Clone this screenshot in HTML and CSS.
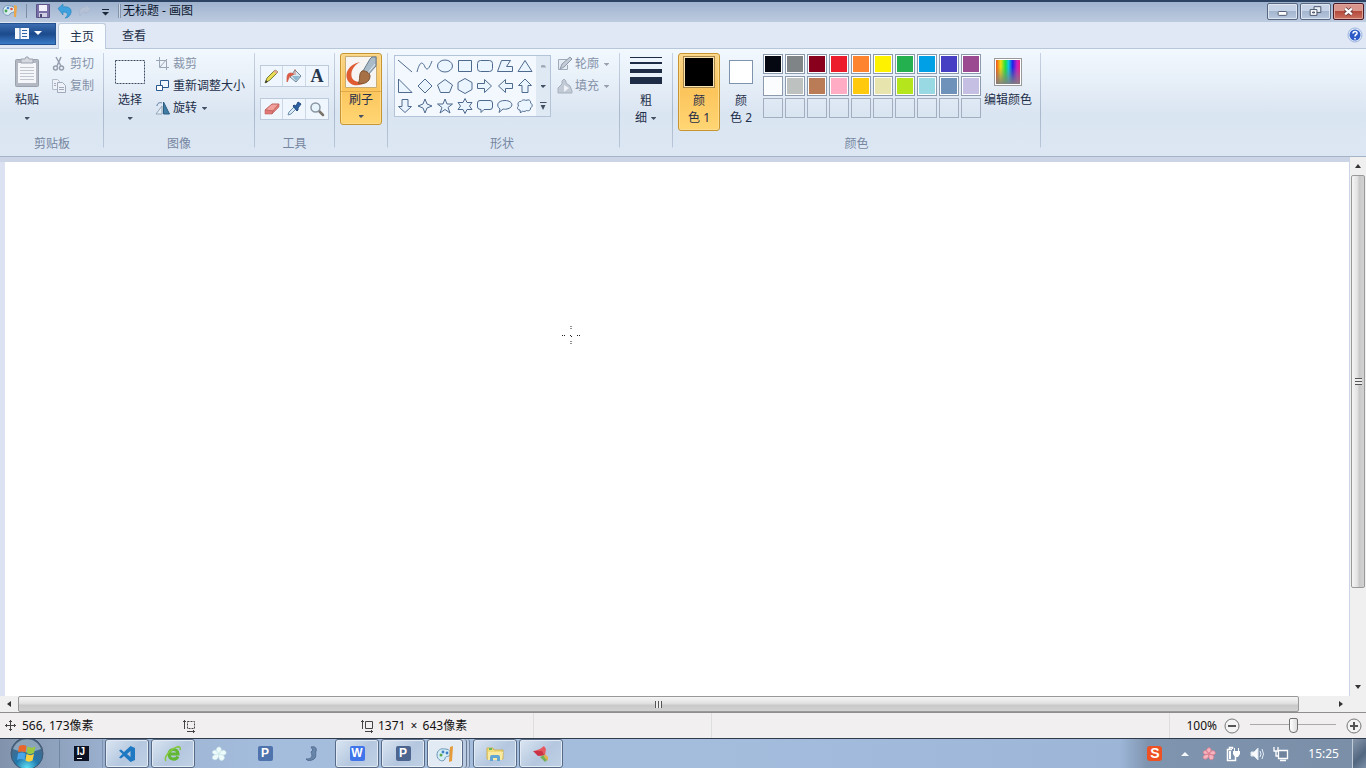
FILE: index.html
```html
<!DOCTYPE html>
<html lang="zh-CN">
<head>
<meta charset="utf-8">
<title>无标题 - 画图</title>
<link rel="stylesheet" href="styles.css">
</head>
<body>
<header class="titlebar">
  <svg class="i16" viewBox="0 0 16 16"><path d="M1 8C1 3 5 2 8 3c5 0 6 4 4 6-2 1-3 0-4 2-1 3-7 1-7-3z" fill="#d9ecf3" stroke="#7896b5"/><circle cx="4" cy="8" r="1.4" fill="#46a54b"/><circle cx="6" cy="5" r="1.3" fill="#4a86d8"/><circle cx="9.500" cy="6" r="1.300" fill="#e0533c"/><path d="M12 2l3 1-1 11h-2z" fill="#e9a64a"/></svg>
  <span class="tb-sep"></span>
  <button class="qat" aria-label="保存"><svg class="i16" viewBox="0 0 16 16"><path d="M1.500 1.500h13v13h-13z" fill="#7a70a8" stroke="#5d5488"/><path d="M4 2h8v6H4z" fill="#f2f2fa"/><path d="M4 10h8v4H4z" fill="#cfcfe4"/><path d="M5 11h2v3H5z" fill="#4c4674"/></svg></button>
  <button class="qat" aria-label="撤消"><svg class="i16" viewBox="0 0 16 16"><path d="M1 5.500L6 1v3c6-1 9 2 8 6-1 3-3 5-6 5 3-2 4-6-2-6v3z" fill="#3ea0dc" stroke="#2a83c0" stroke-width=".6"/></svg></button>
  <button class="qat" aria-label="恢复"><svg class="i16" viewBox="0 0 16 16"><path d="M14 6L9 2v2C4 4 1 7 3 13c1-3 3-4 6-4v2z" fill="#b4c0d4" stroke="#a5b3ca" stroke-width=".5"/></svg></button>
  <button class="qat" aria-label="自定义快速访问工具栏"><svg class="i16" viewBox="0 0 16 16"><path d="M5 6h7v1H5zM5 9h7l-3.500 3.500z" fill="#1c2838"/></svg></button>
  <span class="tb-sep double"></span>
  <h1 class="title">无标题 - 画图</h1>
  <div class="winbtns">
    <button class="wb" aria-label="最小化"><svg viewBox="0 0 30 15"><rect x="10.500" y="7.500" width="9" height="4" rx="1" fill="#fff" stroke="#4e5b70"/></svg></button>
    <button class="wb" aria-label="还原"><svg viewBox="0 0 30 15"><path d="M13.500 2.500h7v6h-7z" fill="#e8eef6" stroke="#47546a"/><path d="M9.500 5.500h7v6h-7z" fill="#fff" stroke="#47546a"/><path d="M12 8h2v1h-2z" fill="#9ab" stroke="#47546a"/></svg></button>
    <button class="wb close" aria-label="关闭"><svg viewBox="0 0 30 15"><path d="M11.500 4.500l7 6M18.500 4.500l-7 6" stroke="#573037" stroke-width="4"/><path d="M11.500 4.500l7 6M18.500 4.500l-7 6" stroke="#fff" stroke-width="2.400"/></svg></button>
  </div>
</header>
<nav class="tabs">
  <button class="filebtn" aria-label="画图菜单"><svg viewBox="0 0 32 14"><path d="M3 1h14v11H3z" fill="#f4f8fc"/><path d="M8 1v11M10 3.500h5M10 6.500h5M10 9.500h5" stroke="#2d64a8" fill="none"/><path d="M22 4h8l-4 4z" fill="#fff"/></svg></button>
  <button class="tab active">主页</button>
  <button class="tab">查看</button>
  <button class="help" aria-label="帮助"><svg class="i16" viewBox="0 0 16 16"><circle cx="8" cy="8" r="7" fill="#e6eefb" stroke="#9db4de"/><circle cx="8" cy="8" r="5.500" fill="#2c5bc8"/><path d="M6 6.500C6 3.500 10.500 4 10 6.500 9.700 7.700 8 7.500 8 9.500M8 11v1.500" stroke="#fff" stroke-width="1.600" fill="none"/></svg></button>
</nav>
<div class="ribbon">
  <section class="group first">
    <div class="content">
      <button class="big"><svg class="i32" viewBox="0 0 32 32"><rect x="4.500" y="3.500" width="23" height="27" rx="1" fill="#b3b8c2" stroke="#9ba1ad"/><path d="M7 7h18v20H7z" fill="#f4f6fa"/><path d="M9 11.500h14M9 14.500h14M9 17.500h14M9 20.500h14M9 23.500h14" stroke="#c0c5ce"/><path d="M10 3h4l1-2h2l1 2h4v4H10z" fill="#d5d8df" stroke="#9ba1ad"/></svg><span>粘贴</span><i class="arrow"></i></button>
      <div class="smalls">
        <button class="small off"><svg class="i16" viewBox="0 0 16 16"><path d="M4 1l5 9M9 1L5 10" stroke="#959fae" stroke-width="1.500"/><circle cx="3.500" cy="12" r="2" fill="none" stroke="#959fae" stroke-width="1.500"/><circle cx="9.500" cy="12" r="2" fill="none" stroke="#959fae" stroke-width="1.500"/></svg><span>剪切</span></button>
        <button class="small off"><svg class="i16" viewBox="0 0 16 16"><path d="M.5 1.500h5l2 2v8h-7z" fill="#eef2f8" stroke="#b3bcca"/><path d="M5.500 4.500h5l3 3v7h-8z" fill="#eef2f8" stroke="#a0aaba"/><path d="M7 9.500h5M7 11.500h5M2 5.500h2M2 7.500h2" stroke="#a0aaba"/></svg><span>复制</span></button>
      </div>
    </div>
    <h2 class="label">剪贴板</h2>
  </section>
  <section class="group">
    <div class="content">
      <button class="big"><svg class="i32" viewBox="0 0 32 32"><rect x="1.500" y="4.500" width="29" height="23" fill="#f0f7fe" stroke="#3b4a60" stroke-dasharray="2 1"/></svg><span>选择</span><i class="arrow"></i></button>
      <div class="smalls">
        <button class="small off"><svg class="i16" viewBox="0 0 16 16"><path d="M4.500 1v10.500H14M1 4.500h10.500V14M5 11l7-8" fill="none" stroke="#9aa5b5"/></svg><span>裁剪</span></button>
        <button class="small"><svg class="i16" viewBox="0 0 16 16"><path d="M5.500 2.500h8v7h-8z" fill="#eef6ff" stroke="#27598f"/><path d="M1.500 7.500h6v5h-6z" fill="#fff" stroke="#27598f"/></svg><span>重新调整大小</span></button>
        <button class="small"><svg class="i16" viewBox="0 0 16 16"><path d="M8.500 2v12h6z" fill="#3f7da5" stroke="#2c5e82"/><path d="M7 6v8H1z" fill="#e6eef5" stroke="#93a5b8"/><path d="M2 6c0-3 3-4 5-3" fill="none" stroke="#56799b"/></svg><span>旋转</span><i class="arrow"></i></button>
      </div>
    </div>
    <h2 class="label">图像</h2>
  </section>
  <section class="group">
    <div class="content toolset">
      <div class="toolrow">
        <button aria-label="铅笔"><svg class="i16" viewBox="0 0 16 16"><path d="M1 15l2-5 8-8 3 2-8 8z" fill="#e9dc52" stroke="#77803a"/><path d="M11 2l3 2-1.500 1.500-3-2z" fill="#e8a4a0"/><path d="M1 15l1-3 2 2z" fill="#333"/></svg></button>
        <button aria-label="用颜色填充"><svg class="i16" viewBox="0 0 16 16"><path d="M9 2l6 6-5 6-6-5z" fill="#d8e8f0" stroke="#6e8698"/><path d="M6 8l8 0-4 5z" fill="#8cb8d0"/><path d="M9 7V1M1 10c0-5 3-6 7-4L5 8c-2 0-2 3-4 6z" fill="#e05b43" stroke="#c85743" stroke-width=".7"/></svg></button>
        <button aria-label="文本" class="texttool">A</button>
      </div>
      <div class="toolrow">
        <button aria-label="橡皮擦"><svg class="i16" viewBox="0 0 16 16"><path d="M1 9l7-6h7l-6 7z" fill="#f2a09c" stroke="#bf6360"/><path d="M1 9v4h7l1-3zM9 10l6-7v3l-7 7z" fill="#e07875" stroke="#bf6360" stroke-width=".6"/></svg></button>
        <button aria-label="颜色选取器"><svg class="i16" viewBox="0 0 16 16"><path d="M2 14l1-3 5-5 2 2-5 5z" fill="#d9ecf8" stroke="#7290ac"/><path d="M7 5l1-1 2 1 2-4 3 2-3 4 0 2-1 1z" fill="#2c62a4" stroke="#214b80"/></svg></button>
        <button aria-label="放大镜"><svg class="i16" viewBox="0 0 16 16"><path d="M9.500 9.500L14 14" stroke="#7a7468" stroke-width="2.500" stroke-linecap="round"/><circle cx="6.500" cy="6.500" r="4.500" fill="#e8f4fc" stroke="#8b96a4" stroke-width="1.500"/></svg></button>
      </div>
    </div>
    <h2 class="label">工具</h2>
  </section>
  <section class="group">
    <div class="content">
      <button class="big hot"><svg class="i32" viewBox="0 0 32 32"><path d="M.5.5h31v31H.5z" fill="#f6f5f3" stroke="#c9ac72"/><path d="M15 6C3 9 0 17 2 23c3 8 14 8 20 2-7 2-13 1-15-3C5 16 8 10 15 6z" fill="#df5b32"/><path d="M18 15l7-12 2-2h4v9l-9 10z" fill="#a9bbc9" stroke="#687d90"/><path d="M20 16l5 5-2-4 7-9" fill="none" stroke="#dde6ec"/><path d="M17 15c3-1 8 2 8 5 0 6-6 9-12 7 3-3 0-9 4-12z" fill="#a87045" stroke="#7f5433"/></svg><span class="split">刷子</span><i class="arrow"></i></button>
    </div>
  </section>
  <section class="group shapes-group">
    <div class="content">
      <div class="gallery">
        <div class="shapes">
          <button aria-label="直线"><svg viewBox="0 0 20 20"><path d="M3 4l14 12"/></svg></button>
          <button aria-label="曲线"><svg viewBox="0 0 20 20"><path d="M2 16C5 4 8 6 10 11c2 4 4 2 7-6"/></svg></button>
          <button aria-label="椭圆形"><svg viewBox="0 0 20 20"><ellipse cx="10" cy="10" rx="7.500" ry="6"/></svg></button>
          <button aria-label="矩形"><svg viewBox="0 0 20 20"><path d="M3.500 4.500h13v11h-13z"/></svg></button>
          <button aria-label="圆角矩形"><svg viewBox="0 0 20 20"><rect x="2.500" y="4.500" width="15" height="11" rx="3"/></svg></button>
          <button aria-label="多边形"><svg viewBox="0 0 20 20"><path d="M2.500 15.500l4-11h9l-4 6h6v5z"/></svg></button>
          <button aria-label="三角形"><svg viewBox="0 0 20 20"><path d="M10 4.500l7 11H3z"/></svg></button>
          <button aria-label="直角三角形"><svg viewBox="0 0 20 20"><path d="M3.500 3v13.500H17z"/></svg></button>
          <button aria-label="菱形"><svg viewBox="0 0 20 20"><path d="M10 3l7 7-7 7-7-7z"/></svg></button>
          <button aria-label="五边形"><svg viewBox="0 0 20 20"><path d="M10 3.500l7.500 5.500-3 7.500h-9L2.500 9z"/></svg></button>
          <button aria-label="六边形"><svg viewBox="0 0 20 20"><path d="M10 2.500l7 4v7l-7 4-7-4v-7z"/></svg></button>
          <button aria-label="右箭头"><svg viewBox="0 0 20 20"><path d="M2.500 7.500h7v-4l7 6.500-7 6.500v-4h-7z"/></svg></button>
          <button aria-label="左箭头"><svg viewBox="0 0 20 20"><path d="M17.500 7.500h-7v-4L3.500 10l7 6.500v-4h7z"/></svg></button>
          <button aria-label="上箭头"><svg viewBox="0 0 20 20"><path d="M7 16.500v-7H3.500L10 3l6.500 6.500H13v7z"/></svg></button>
          <button aria-label="下箭头"><svg viewBox="0 0 20 20"><path d="M7 3.500v7H3.500l6.500 6 6.500-6H13v-7z"/></svg></button>
          <button aria-label="四角星"><svg viewBox="0 0 20 20"><path d="M10 3l2 5 5 2-5 2-2 5-2-5-5-2 5-2z"/></svg></button>
          <button aria-label="五角星"><svg viewBox="0 0 20 20"><path d="M10 3l2 5h5.500l-4.500 3.500 2 5.500-5-3.500L5 17l2-5.500L2.500 8H8z"/></svg></button>
          <button aria-label="六角星"><svg viewBox="0 0 20 20"><path d="M10 2.500l2 4h5l-2.500 3.500L17 13.500h-5l-2 4-2-4H3L5.500 10 3 6.500h5z"/></svg></button>
          <button aria-label="圆角矩形标注"><svg viewBox="0 0 20 20"><path d="M5 4.500h10q2.500 0 2.500 2.500v4q0 2.500-2.500 2.500H9l-3 3v-3q-3.500 0-3.500-2.500V7Q2.500 4.500 5 4.500z"/></svg></button>
          <button aria-label="椭圆形标注"><svg viewBox="0 0 20 20"><path d="M5 13C1 10 2 4.500 10 4.500s9.500 7 2 8.500c-2 .4-3 .2-4 0l-4 3.500z"/></svg></button>
          <button aria-label="云形标注"><svg viewBox="0 0 20 20"><path d="M5 14c-3 0-3-3-1.500-4C2 7 4 5 6 5.500 8 3 10 4 11 4.500c3-1.500 5 0 4.500 2.500 2.500 1 2 4 0 5 0 3-2 3-4 2.500-2 1.500-3 1-4 .5l-2 2z"/></svg></button>
        </div>
        <div class="gscroll">
          <button aria-label="上一行" class="dim"><i class="arrow up"></i></button>
          <button aria-label="下一行"><i class="arrow"></i></button>
          <button aria-label="更多形状"><i class="arrow bar"></i></button>
        </div>
      </div>
      <div class="smalls">
        <button class="small off"><svg class="i16" viewBox="0 0 16 16"><path d="M11 3.500H1.500v10h9V9" fill="#e5ebf3" stroke="#9fabba"/><path d="M3 13l2-5 8-7 2 2-8 8z" fill="#c3cbd6" stroke="#8f9bac"/></svg><span>轮廓</span><i class="arrow"></i></button>
        <button class="small off"><svg class="i16" viewBox="0 0 16 16"><path d="M1 15v-5l4-4V3l2-2 2 2v2l4 3 2 5v2z" fill="#c2cad5" stroke="#a6b0be"/><path d="M7 7l5 3-5 4z" fill="#eff3f8"/></svg><span>填充</span><i class="arrow"></i></button>
      </div>
    </div>
    <h2 class="label">形状</h2>
  </section>
  <section class="group">
    <div class="content">
      <button class="big two"><svg class="i32" viewBox="0 0 32 32"><path d="M0 1h32v1H0zM0 6h32v2H0zM0 13h32v4H0zM0 21h32v7H0z" fill="#1e2d45"/></svg><span>粗<br>细 <i class="arrow"></i></span></button>
    </div>
  </section>
  <section class="group">
    <div class="content">
      <button class="big two hot"><b class="current black"></b><span>颜<br>色 1</span></button>
      <button class="big two"><b class="current white"></b><span>颜<br>色 2</span></button>
      <div class="palette">
        <button class="c01" aria-label="黑色"></button><button class="c02" aria-label="灰色-50%"></button><button class="c03" aria-label="深红色"></button><button class="c04" aria-label="红色"></button><button class="c05" aria-label="橙色"></button><button class="c06" aria-label="黄色"></button><button class="c07" aria-label="绿色"></button><button class="c08" aria-label="青绿色"></button><button class="c09" aria-label="靛青色"></button><button class="c10" aria-label="紫色"></button>
        <button class="c11" aria-label="白色"></button><button class="c12" aria-label="灰色-25%"></button><button class="c13" aria-label="褐色"></button><button class="c14" aria-label="玫瑰色"></button><button class="c15" aria-label="金色"></button><button class="c16" aria-label="浅黄色"></button><button class="c17" aria-label="酸橙色"></button><button class="c18" aria-label="淡青绿色"></button><button class="c19" aria-label="蓝灰色"></button><button class="c20" aria-label="淡紫色"></button>
        <button class="none" aria-label="自定义 1"></button><button class="none" aria-label="自定义 2"></button><button class="none" aria-label="自定义 3"></button><button class="none" aria-label="自定义 4"></button><button class="none" aria-label="自定义 5"></button><button class="none" aria-label="自定义 6"></button><button class="none" aria-label="自定义 7"></button><button class="none" aria-label="自定义 8"></button><button class="none" aria-label="自定义 9"></button><button class="none" aria-label="自定义 10"></button>
      </div>
      <button class="big edit"><b class="spectrum"></b><span>编辑颜色</span></button>
    </div>
    <h2 class="label">颜色</h2>
  </section>
</div>
<main class="work">
  <div class="canvas">
    <svg class="cursor" viewBox="0 0 20 20"><path d="M10 1v1M10 3v1M10 16v1M10 18v1M1 10.500h1M3 10.500h1M16 10.500h1M18 10.500h1M9 10.500h1M10 11.500h1" stroke="#222" fill="none" stroke-width="1"/></svg>
  </div>
  <div class="vscroll">
    <button aria-label="向上滚动"><i class="tri up"></i></button>
    <div class="vtrack"><div class="vthumb"><i class="grip"></i></div><div class="vrest"></div></div>
    <button aria-label="向下滚动"><i class="tri down"></i></button>
  </div>
  <div class="hscroll">
    <button aria-label="向左滚动"><i class="tri left"></i></button>
    <div class="htrack"><div class="hthumb"><i class="grip"></i></div><div class="hrest"></div></div>
    <button aria-label="向右滚动"><i class="tri right"></i></button>
  </div>
  <div class="corner"></div>
</main>
<footer class="status">
  <div class="cell"><svg class="i14" viewBox="0 0 14 14"><path d="M6.500 1v11M1 6.500h11M5 2.500h3M5 10.500h3M2.500 5v3M10.500 5v3" stroke="#444" fill="none"/></svg><span>566, 173像素</span></div>
  <div class="cell"><svg class="i14" viewBox="0 0 14 14"><path d="M2.500 1v9M1 2.500h3M5 12.500h8M11.500 11v3" stroke="#444" fill="none"/><path d="M5.500 2.500h7v7h-7z" fill="none" stroke="#444" stroke-dasharray="2 1"/></svg></div>
  <div class="cell line"><svg class="i14" viewBox="0 0 14 14"><path d="M2.500 1v9M1 2.500h3M5 12.500h8M11.500 11v3M5.500 2.500h7v7h-7z" fill="none" stroke="#444"/></svg><span>1371 <span class="times">×</span> 643像素</span></div>
  <div class="cell line"></div>
  <div class="cell line"></div>
  <div class="zoom">
    <label for="zoom">100%</label>
    <button aria-label="缩小"><svg class="i16" viewBox="0 0 16 16"><circle cx="8" cy="8" r="7" fill="#f4f4f4" stroke="#777"/><path d="M4 8h8" stroke="#555" stroke-width="2"/></svg></button>
    <input id="zoom" type="range" min="0" max="100" value="50">
    <button aria-label="放大"><svg class="i16" viewBox="0 0 16 16"><circle cx="8" cy="8" r="7" fill="#f4f4f4" stroke="#777"/><path d="M4 8h8M8 4v8" stroke="#555" stroke-width="2"/></svg></button>
  </div>
</footer>
<div class="taskbar">
  <button class="start" aria-label="开始"><svg viewBox="0 0 36 29"><defs><radialGradient id="orb" cx=".5" cy=".95" r=".8"><stop offset="0" stop-color="#5ee0f5"/><stop offset=".45" stop-color="#2278ac"/><stop offset="1" stop-color="#4a6684"/></radialGradient></defs><circle cx="18" cy="14.500" r="16" fill="url(#orb)" stroke="#40566f"/><path d="M4 10C9-3 27-3 32 10c-9 4-19 4-28 0z" fill="#c5d5e3" opacity=".55"/><path d="M10 7c3-1.500 5-1.500 7.500 0l-1 6.500c-3-1.500-5-1.500-7.500 0z" fill="#e8662b"/><path d="M18.500 7.500c3 1.500 5 1.500 8 0l-1.500 6.500c-3 1.500-5 1.500-7.500 0z" fill="#9bc843"/><path d="M9 14.500c3-1.500 5-1.500 7.500 0l-1 6.500c-3-1.500-5-1.500-7.500 0z" fill="#4aa5e8"/><path d="M17.500 15c3 1.500 5 1.500 7.500 0l-1.500 6.500c-3 1.500-4.500 1.500-7 0z" fill="#fbd03c"/></svg></button>
  <div class="apps">
    <button class="app plain" aria-label="IntelliJ IDEA"><span class="logo ij">IJ</span></button>
    <button class="app" aria-label="VS Code"><svg class="i18" viewBox="0 0 18 18"><path d="M12.500 1L17 3v12l-4.500 2L6 11l-3 2.500L1 12.500 4.500 9 1 5.500l2-1L6 7zM12.500 6L9 9l3.500 3z" fill="#1e78c2" fill-rule="evenodd"/></svg></button>
    <button class="app" aria-label="浏览器"><svg class="i18" viewBox="0 0 18 18"><path d="M14 11.500c-2 4-9 3.500-9-2.500 0-6 9-6 9 0H5" fill="none" stroke="#62b832" stroke-width="3"/><path d="M2 16C-1 12 9 1 16 2M13 2c2-1 4 0 3 3" fill="none" stroke="#86c940" stroke-width="1.500"/></svg></button>
    <button class="app plain" aria-label="风车"><svg class="i18" viewBox="0 0 18 18"><path d="M9 9C5 7 6 2 9 2s3 4 0 7c1-4 6-5 7-2s-3 4-7 2c5 0 7 4 4 6s-5-2-4-6c0 5-4 7-6 5s1-5 6-5C5 11 1 8 3 6s5 0 6 3z" fill="#eefbfb" stroke="#cce7ea" stroke-width=".6"/></svg></button>
    <button class="app plain" aria-label="P"><span class="logo pblue">P</span></button>
    <button class="app plain" aria-label="钩子"><svg class="i18" viewBox="0 0 18 18"><path d="M9 2c4-1 6 1 5 4-1 3 1 5-2 8-3 2-7 2-8 0 4 0 6-1 6-4 0-1-1-2-1-3l2-2z" fill="#6886a9" stroke="#536f93"/></svg></button>
    <button class="app" aria-label="WPS"><span class="logo wps">W</span></button>
    <button class="app" aria-label="P 2"><span class="logo pdark">P</span></button>
    <button class="app stack current-app" aria-label="画图"><svg class="i18" viewBox="0 0 18 18"><path d="M1 10c0-5 4-7 8-6 6 0 6 5 4 7-2 1-4 0-4 3-2 4-8 1-8-4z" fill="#d4edf6" stroke="#6c99b5"/><circle cx="5" cy="10" r="1.500" fill="#5aa64c"/><circle cx="7" cy="7" r="1.400" fill="#3f7fc8"/><circle cx="11" cy="8" r="1.400" fill="#3f7fc8"/><path d="M14 2l3-1-1 15-3 1z" fill="#e59b3c"/></svg></button>
    <button class="app" aria-label="资源管理器"><svg class="i18" viewBox="0 0 18 18"><path d="M1 3h6l1 2h9v9H1z" fill="#f1dc7c" stroke="#cfb052"/><path d="M2 7h15l-1 8H2z" fill="#f8eaa0"/><path d="M4 16v-4q0-2 2-2h6q2 0 2 2v4h-3v-3H7v3z" fill="#5fa6d5"/><path d="M3 3h3v2H3z" fill="#68b85e"/></svg></button>
    <button class="app" aria-label="录屏"><svg class="i18" viewBox="0 0 18 18"><path d="M2 6l6-2 4-3 2 3-1 6-5 1z" fill="#e65860"/><path d="M1 6h9l2 4-6 1z" fill="#c93346"/><path d="M8 12l4-2 4 4-3 3z" fill="#72b35a"/><path d="M13 9l3 3v4l-4-4z" fill="#e4b34e"/></svg></button>
  </div>
  <div class="tray">
    <button aria-label="搜狗输入法"><span class="sogou">S</span></button>
    <button aria-label="显示隐藏的图标"><svg class="i16" viewBox="0 0 16 16"><path d="M4 10h8L8 6z" fill="#f4f8fc"/></svg></button>
    <button aria-label="风车托盘"><svg class="i16" viewBox="0 0 18 18"><path d="M9 9C5 7 6 2 9 2s3 4 0 7c1-4 6-5 7-2s-3 4-7 2c5 0 7 4 4 6s-5-2-4-6c0 5-4 7-6 5s1-5 6-5C5 11 1 8 3 6s5 0 6 3z" fill="#f5b4be" stroke="#dc7e90"/></svg></button>
    <button aria-label="电源"><svg class="i16" viewBox="0 0 16 16"><path d="M7 3.500H2.500v11h8V11M4.500 3V1.500h3V3" fill="none" stroke="#fff" stroke-width="1.500"/><path d="M4 5h2v8H4zM8 5h7v3l-2 3h-3L8 8zM9 2h1v3H9zM13 2h1v3h-1z" fill="#fff"/></svg></button>
    <button aria-label="音量"><svg class="i16" viewBox="0 0 16 16"><path d="M2 6h3l4-4v12l-4-4H2z" fill="#f8fafc" stroke="#dce4ee"/><path d="M11 5q2 3 0 6M13 3q3 5 0 10" fill="none" stroke="#e5edf6"/></svg></button>
    <button aria-label="网络"><svg class="i16" viewBox="0 0 16 16"><path d="M5.500 4.500h9v8h-9zM7 14.500h6" fill="#6f839c" stroke="#fff" stroke-width="1.300"/><path d="M1 1v4h4V1M3 5v5h2" fill="none" stroke="#fff" stroke-width="1.300"/></svg></button>
    <time class="clock">15:25</time>
    <button class="desktop" aria-label="显示桌面"></button>
  </div>
</div>
</body>
</html>
```

FILE: styles.css
```css
* { box-sizing: border-box; }

body {
  margin: 0;
  min-height: 100vh;
  display: flex;
  flex-direction: column;
  overflow: hidden;
  font: 12px/16px "Noto Sans", "Noto Sans CJK SC", sans-serif;
  color: #1e2f4a;
}

button {
  margin: 0;
  padding: 0;
  border: 0;
  background: none;
  font: inherit;
  color: inherit;
}

svg { display: block; flex: none; }
h1, h2 { margin: 0; font: inherit; }
.i14 { width: 14px; height: 14px; }
.i16 { width: 16px; height: 16px; }
.i18 { width: 18px; height: 18px; }
.i32 { width: 32px; height: 32px; }

.arrow {
  flex: none;
  display: inline-block;
  width: 7px;
  height: 8px;
  background: linear-gradient(#445064, #445064) center / 5px 3px no-repeat;
  clip-path: polygon(0 30%, 100% 30%, 50% 75%);
}
.arrow.up { clip-path: polygon(0 70%, 100% 70%, 50% 20%); }
.arrow.bar {
  clip-path: polygon(0 0, 100% 0, 100% 15%, 85% 38%, 50% 100%, 15% 38%, 0 15%);
  background: linear-gradient(#445064 1px, transparent 1px, transparent 3px, #445064 3px);
}

/* Title bar */
.titlebar {
  display: flex;
  align-items: center;
  height: 22px;
  padding: 0 2px 2px;
  border-top: 2px solid #2c4364;
  background: linear-gradient(#9fb3cf, #bdcbdf);
}
.tb-sep { width: 1px; height: 14px; margin: 0 8px; background: #7d8ca5; }
.tb-sep.double { width: 3px; margin: 0 2px 0 1px; border: solid #8493ac; border-width: 0 1px; background: #ccd7e6; }
.qat { padding: 0 4px 0 0; }
.tb-sep + .qat { padding-left: 7px; margin-left: -7px; }
.tb-sep + .qat { padding-right: 6px; }
.title { color: #0d1830; }
.winbtns { display: flex; gap: 2px; margin-left: auto; }
.wb {
  width: 31px;
  height: 17px;
  border: 1px solid #56677f;
  border-radius: 2px;
  background: linear-gradient(#c6d3e6 50%, #a4b5cf 50%, #b7c8de);
  box-shadow: inset 0 0 0 1px #dce5f0;
}
.wb svg { width: 29px; height: 15px; }
.wb.close {
  border-color: #4c1a24;
  background: linear-gradient(#d9968d 45%, #b34a3c 50%, #cc7260);
  box-shadow: inset 0 0 0 1px #dfa59c;
}

/* Tabs */
.tabs {
  display: flex;
  align-items: flex-end;
  gap: 4px;
  height: 27px;
  border-bottom: 1px solid #b7c7da;
  background: #dfe8f4;
}
.filebtn {
  align-self: flex-start;
  display: flex;
  justify-content: center;
  align-items: center;
  width: 56px;
  height: 22px;
  margin: 1px -2px 0 0;
  border: 1px solid #24528e;
  border-left: 0;
  background: linear-gradient(#3b6db0, #1c4a8c 50%, #3a7cc8);
}
.filebtn svg { width: 32px; height: 14px; }
.tab { width: 48px; height: 25px; border: 1px solid transparent; border-bottom: 0; }
.tab.active {
  height: 26px;
  margin-bottom: -1px;
  border-color: #bccbdd;
  border-radius: 3px 3px 0 0;
  background: #f9fcff;
}
.help { align-self: center; margin: 0 3px 0 auto; }

/* Ribbon */
.ribbon {
  display: flex;
  padding: 4px 0;
  border-bottom: 1px solid #a6b4c8;
  background: linear-gradient(#f2f8fe, #e3ecf6 40%, #dae5f2 60%, #dde7f4);
}
.group {
  display: flex;
  flex-direction: column;
  padding: 0 5px;
  border-right: 1px solid;
  border-image: linear-gradient(#c8d3e2, #a9b8cc 60%, #b9c6d8 94%, transparent 95%) 1;
}
.group.first { padding-left: 6px; }
.group:nth-child(-n+2) { padding-right: 9px; }
.group:nth-child(-n+2) .label { margin-right: -4px; }
.shapes-group { padding: 0 9px 0 6px; }
.content { display: flex; align-items: flex-start; height: 83px; }
.label { text-align: center; color: #7686a0; }

.big {
  display: flex;
  flex-direction: column;
  align-items: center;
  width: 42px;
  padding: 2px 0;
  border: 1px solid transparent;
  border-radius: 3px;
}
.big > span { margin-top: 4px; }
.big > .arrow { margin: 6px 0 2px; }
.big.hot > .arrow { margin: 4px 0 2px; }
.big.two { height: 78px; }
.big.two > span { line-height: 17px; text-align: center; }
.big.hot {
  border-color: #c79432;
  background: linear-gradient(#f8d48a, #fcc55c 50%, #ffd674);
  box-shadow: inset 0 0 0 1px #ffdc8c;
}
.big .split { align-self: stretch; text-align: center; box-shadow: 0 -1px #dfa94c; }

.smalls { margin-left: 4px; }
.gallery + .smalls { margin-left: 6px; }
.small { display: flex; align-items: center; gap: 2px; height: 22px; }
.small .arrow { margin-left: 2px; }
.small.off { color: #8592a8; }
.small.off .arrow { opacity: .5; }

.toolset { flex-direction: column; gap: 11px; padding-top: 12px; }
.toolrow { display: flex; border: 1px solid #bccadb; background: #eff6fd; }
.toolrow button { display: flex; justify-content: center; align-items: center; width: 21px; height: 20px; }
.toolrow button + button { width: 23px; border-left: 1px solid #ccd8e6; }
.toolrow .texttool { font: bold 18px/20px "Liberation Serif", serif; color: #26364e; }

.gallery {
  display: flex;
  width: 157px;
  margin-top: 2px;
  border: 1px solid #b4c4d8;
  background: #f2f8fe;
}
.shapes { display: grid; grid-template-columns: repeat(7, 20px); grid-auto-rows: 20px; height: 60px; }
.shapes svg { width: 20px; height: 20px; fill: #eaf5ff; stroke: #4f6a8f; stroke-width: 1; }
.shapes button:nth-child(-n+2) svg { fill: none; }
.gscroll { flex: 1; display: flex; flex-direction: column; margin-left: 1px; background: #dfe9f4; }
.gscroll button { flex: 1; display: flex; align-items: center; justify-content: center; }
.gscroll .dim { opacity: .4; }

.current { display: block; width: 32px; height: 32px; border: 1px solid #a78448; box-shadow: inset 0 0 0 1px #fce4b0; }
.current.black { background: #000; }
.current.white { width: 24px; height: 24px; margin: 4px; border-color: #7e93ad; background: #fff; box-shadow: none; }

.palette { display: grid; grid-template-columns: repeat(10, 20px); grid-auto-rows: 20px; gap: 2px; margin: 1px 2px 0 1px; }
.palette button { border: 1px solid #8c9aae; box-shadow: inset 0 0 0 1px #fff; }
.palette .none { border-color: #a3afc0; box-shadow: none; }
.c01 { background: #050810; } .c02 { background: #7f8486; } .c03 { background: #88001b; } .c04 { background: #ec1c2c; }
.c05 { background: #ff8430; } .c06 { background: #fff200; } .c07 { background: #24b04f; } .c08 { background: #00a0e6; }
.c09 { background: #463fc4; } .c10 { background: #9b4a92; } .c11 { background: #fbfcfe; } .c12 { background: #bdc1c0; }
.c13 { background: #b97c56; } .c14 { background: #ffacc4; } .c15 { background: #ffc90e; } .c16 { background: #e8e4ad; }
.c17 { background: #b5e61d; } .c18 { background: #99d9e3; } .c19 { background: #6e92ba; } .c20 { background: #c5bfe4; }
.big.edit { width: 50px; margin-right: 2px; }
.big.edit > span { white-space: nowrap; }
.spectrum {
  display: block;
  width: 28px;
  height: 28px;
  margin: 2px;
  border: 1px solid #999;
  background: linear-gradient(transparent 30%, #808080) padding-box, linear-gradient(90deg, #f03020, #f0e010 22%, #20e040 40%, #10c8e0 52%, #2020e8 68%, #d020c0 85%, #f02060);
  box-shadow: inset 0 0 0 1px #fff;
}

/* Drawing area */
.work {
  flex: 1;
  display: grid;
  grid-template-columns: 1fr 16px;
  grid-template-rows: 1fr 16px;
  background: #ccd5e5;
}
.canvas { position: relative; margin: 5px 1px 0 5px; background: #fff; box-shadow: -5px 0 #dce2f2; }
.cursor { position: absolute; left: 556px; top: 163px; width: 20px; height: 20px; }
.vscroll, .vtrack { display: flex; flex-direction: column; }
.vscroll { background: #f0f0f0; }
.hscroll { display: flex; background: #f0f0f0; }
.htrack { flex: 1; display: flex; }
.vtrack { flex: 1; }
.vscroll button, .hscroll button { width: 18px; height: 18px; display: flex; align-items: center; justify-content: center; }
.vscroll button, .hscroll button { max-width: 100%; max-height: 100%; }
.vthumb { flex: 82; display: flex; align-items: center; justify-content: center; border: 1px solid #999; border-radius: 2px; margin: 0 1px; background: linear-gradient(90deg, #f5f5f5, #e2e2e2 45%, #c9c9c9 60%, #d2d2d2); }
.vrest { flex: 18; }
.hthumb { flex: 195; display: flex; align-items: center; justify-content: center; border: 1px solid #999; border-radius: 2px; background: linear-gradient(#f5f5f5, #e2e2e2 45%, #c9c9c9 60%, #d2d2d2); }
.hrest { flex: 5; }
.grip { width: 7px; height: 7px; background: repeating-linear-gradient(#555 0 1px, #eee 1px 3px); }
.hthumb .grip { background: repeating-linear-gradient(90deg, #555 0 1px, #eee 1px 3px); }
.tri { width: 6px; height: 4px; background: #333; }
.tri.up { clip-path: polygon(50% 0, 100% 100%, 0 100%); }
.tri.down { clip-path: polygon(0 0, 100% 0, 50% 100%); }
.tri.left { width: 4px; height: 6px; clip-path: polygon(100% 0, 100% 100%, 0 50%); }
.tri.right { width: 4px; height: 6px; clip-path: polygon(0 0, 100% 50%, 0 100%); }
.corner { background: #f0f0f0; }

/* Status bar */
.status {
  display: grid;
  grid-template-columns: repeat(4, 178px) 1fr auto;
  height: 26px;
  border-top: 1px solid #8e8e8e;
  background: #f1efef;
  color: #111;
}
.cell { display: flex; align-items: center; gap: 4px; padding-left: 4px; }
.cell.line { border-right: 1px solid #dedede; }
.cell .times { margin: 0 2px; }
.zoom { display: flex; align-items: center; padding: 0 4px 0 16px; }
.zoom label { margin-right: 7px; }
.zoom input { width: 86px; height: 18px; margin: 0 10px; appearance: none; background: linear-gradient(#aaa, #aaa) center 7px / 100% 1px no-repeat; }
.zoom input::-webkit-slider-thumb {
  appearance: none;
  width: 9px;
  height: 15px;
  border: 1px solid #707070;
  border-radius: 2px 2px 4px 4px;
  background: linear-gradient(90deg, #fff, #ddd);
}

/* Taskbar */
.taskbar {
  display: flex;
  height: 30px;
  border-top: 1px solid #2f3b4b;
  background: linear-gradient(90deg, #8193ac, #9bb1cf 8%, #a5bddd 20%, #a5bddd 50%, #9db6d8 82%, #7f94ae 84%, #7a8ea8);
}
.start { width: 36px; margin: 0 14px 0 9px; }
.start svg { width: 36px; height: 29px; }
.apps { display: flex; gap: 2px; }
.app {
  display: flex;
  align-items: center;
  justify-content: center;
  width: 44px;
  height: 29px;
  border: 1px solid #586b86;
  border-radius: 3px;
  background: linear-gradient(135deg, #dae5f2, #b4c7df 55%, #c0d1e5);
  box-shadow: inset 0 0 0 1px #e2ebf5;
}
.app.plain { border-color: transparent; background: none; box-shadow: none; }
.app.plain:first-child { border-left-color: #7188a5; border-right-color: #7d94b2; border-radius: 0; }
.app.current-app { width: 36px; margin-right: 8px; background: #e2eaf3; box-shadow: inset 0 0 0 1px #f4f7fa, 3px 0 #b9cae0, 4px 0 #647892, 6px 0 #b9cae0, 7px 0 #7588a2; }
.logo { width: 15px; height: 15px; border-radius: 2px; font: bold 12px/15px "Liberation Sans", sans-serif; color: #fff; text-align: center; }
.logo.ij { font-size: 10px; line-height: 12px; border-radius: 0; background: linear-gradient(#fff, #fff) 3px 12px / 5px 1px no-repeat #0d1222; }
.logo.pblue { background: #4f74ad; }
.logo.wps { background: #3f74ea; }
.logo.pdark { background: #4c6690; }
.tray { display: flex; align-items: center; gap: 8px; margin-left: auto; color: #fff; }
.sogou { display: block; width: 15px; height: 15px; margin-right: 7px; border-radius: 3px; background: #ee5124; font: bold 14px/15px "Liberation Sans", sans-serif; }
.clock { margin: 0 11px; }
.desktop { align-self: stretch; width: 14px; margin-left: -6px; border-left: 1px solid #c0ccda; background: linear-gradient(135deg, #8797ab, #526780 60%, #7c8fa6); }
```
